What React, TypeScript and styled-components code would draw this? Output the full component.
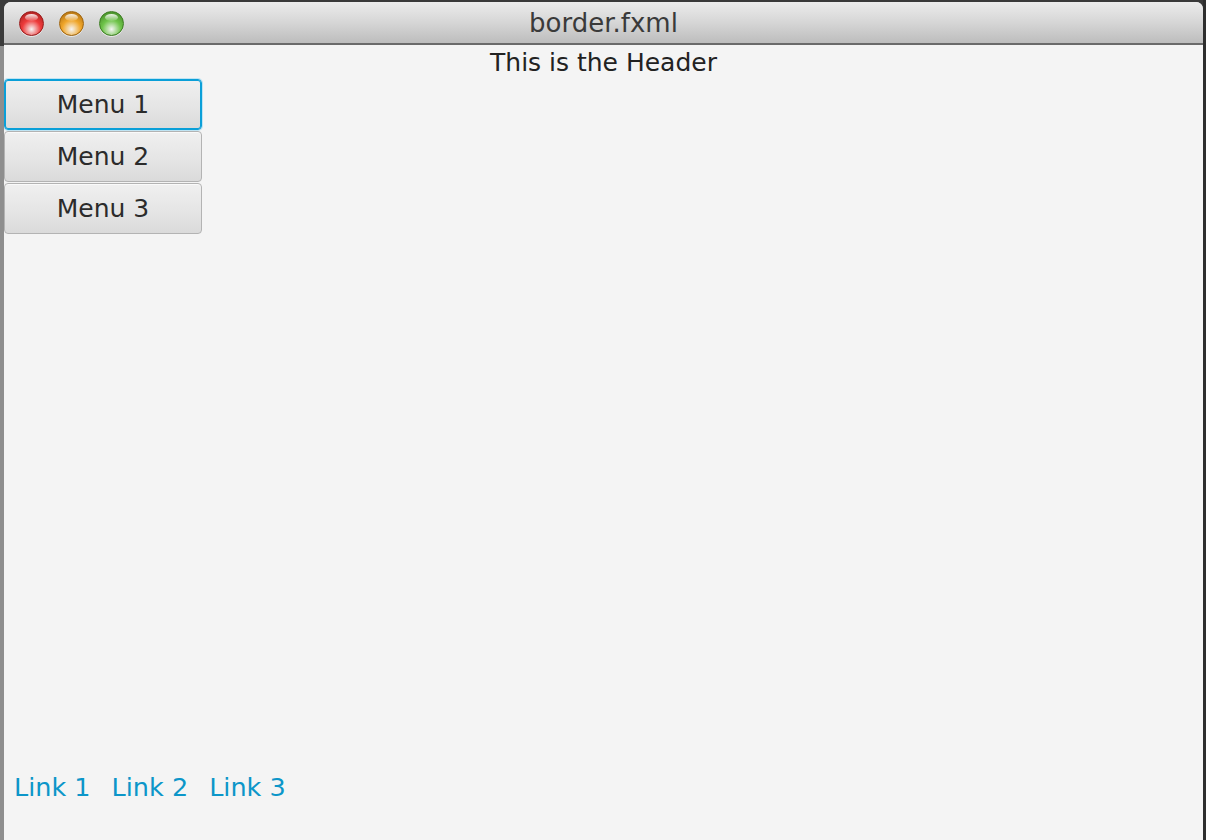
import React from "react";
import styled, { createGlobalStyle } from "styled-components";

const Global = createGlobalStyle`
  html, body { margin: 0; padding: 0; }
  body {
    width: 1206px;
    height: 840px;
    overflow: hidden;
    background: linear-gradient(to bottom, #3a3a3a 0px, #3a3a3a 46px, #8e8e8e 46px, #8e8e8e 100%);
    font-family: "DejaVu Sans", "Liberation Sans", sans-serif;
  }
`;

const Desktop = styled.div`
  width: 1206px;
  height: 840px;
  display: flex;
  padding: 2px 3px 0 4px;
  box-sizing: border-box;
  background: linear-gradient(to right, transparent 0, transparent 1203px, #2e2e2e 1203px);
`;

const Window = styled.div`
  flex: 1;
  display: flex;
  flex-direction: column;
  border-radius: 7px 7px 0 0;
  overflow: hidden;
  background: #f4f4f4;
`;

const TitleBar = styled.div`
  height: 41px;
  flex: none;
  position: relative;
  display: flex;
  align-items: center;
  justify-content: center;
  background: linear-gradient(to bottom, #ececec 0%, #d6d6d6 50%, #bdbdbd 100%);
  border-bottom: 2px solid #6a6a6a;
`;

const Lights = styled.div`
  position: absolute;
  left: 15px;
  top: 9px;
  display: flex;
  gap: 15px;
`;

const Light = styled.div<{ $c: string; $d: string }>`
  width: 25px;
  height: 25px;
  border-radius: 50%;
  box-sizing: border-box;
  border: 1px solid ${(p) => p.$d};
  background: radial-gradient(circle at 50% 75%, #ffffffcc 0%, ${(p) => p.$c} 45%, ${(p) => p.$d} 100%);
  box-shadow: 0 1px 0 rgba(255, 255, 255, 0.6);
  position: relative;
  &::after {
    content: "";
    position: absolute;
    left: 5px;
    top: 2px;
    width: 13px;
    height: 7px;
    border-radius: 50%;
    background: linear-gradient(to bottom, rgba(255, 255, 255, 0.9), rgba(255, 255, 255, 0.1));
  }
`;

const Title = styled.div`
  font-size: 26px;
  color: #3a3a3a;
  padding-top: 1px;
`;

const Pane = styled.div`
  flex: 1;
  display: flex;
  flex-direction: column;
`;

const Header = styled.div`
  height: 34px;
  display: flex;
  align-items: center;
  justify-content: center;
  font-size: 25px;
  color: #222;
`;

const Middle = styled.div`
  flex: 1;
  display: flex;
`;

const Menu = styled.div`
  width: 198px;
  display: flex;
  flex-direction: column;
  gap: 1px;
`;

const MenuButton = styled.button<{ $focused?: boolean }>`
  height: 51px;
  box-sizing: border-box;
  border-radius: 4px;
  border: 1px solid ${(p) => (p.$focused ? "#0a9fd8" : "#b3b3b3")};
  box-shadow: ${(p) => (p.$focused ? "inset 0 0 0 1px #0a9fd8, 0 0 0 1px #bfe4f3" : "inset 0 1px 0 #fafafa")};
  background: linear-gradient(to bottom, #f0f0f0 0%, #e4e4e4 60%, #dadada 100%);
  font-family: "DejaVu Sans", "Liberation Sans", sans-serif;
  font-size: 25px;
  color: #2b2b2b;
  padding: 0;
`;

const Footer = styled.div`
  height: 69px;
  display: flex;
  align-items: flex-start;
  gap: 21px;
  padding-left: 10px;
`;

const Link = styled.a`
  font-size: 25.5px;
  color: #0c96c9;
  line-height: 32px;
  text-decoration: none;
`;

export default function App() {
  return (
    <>
      <Global />
      <Desktop>
        <Window>
          <TitleBar>
            <Lights>
              <Light $c="#ee3b3b" $d="#9a1a1a" />
              <Light $c="#f0a62a" $d="#a0640c" />
              <Light $c="#6fc44a" $d="#3b7d20" />
            </Lights>
            <Title>border.fxml</Title>
          </TitleBar>
          <Pane>
            <Header>This is the Header</Header>
            <Middle>
              <Menu>
                <MenuButton $focused>Menu 1</MenuButton>
                <MenuButton>Menu 2</MenuButton>
                <MenuButton>Menu 3</MenuButton>
              </Menu>
            </Middle>
            <Footer>
              <Link>Link 1</Link>
              <Link>Link 2</Link>
              <Link>Link 3</Link>
            </Footer>
          </Pane>
        </Window>
      </Desktop>
    </>
  );
}
